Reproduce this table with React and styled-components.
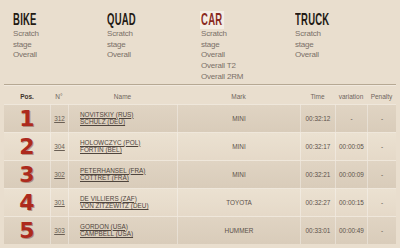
import React from "react";
import styled, { createGlobalStyle } from "styled-components";

const GlobalStyle = createGlobalStyle`
  body {
    margin: 0;
    background: #e9dece;
    font-family: "Liberation Sans", Arial, sans-serif;
  }
`;

const Page = styled.div`
  width: 400px;
  height: 248px;
  overflow: hidden;
`;

const Nav = styled.div`
  display: grid;
  grid-template-columns: repeat(4, 94px);
  padding: 11px 0 0 13px;
`;

const Category = styled.div`
  display: flex;
  flex-direction: column;
  align-items: flex-start;
`;

const Heading = styled.div`
  height: 18px;
  line-height: 18px;
  font-size: 17px;
  font-weight: bold;
  letter-spacing: 0.3px;
  color: ${(p) => (p.$active ? "#8a2a1f" : "#231a14")};
  background: ${(p) => (p.$active ? "#f4ede4" : "transparent")};
  padding: 0 3px 0 2px;
  margin-left: -1px;
  transform: scaleX(0.56);
  transform-origin: left center;
`;

const SubLink = styled.div`
  font-size: 8px;
  line-height: 10.7px;
  letter-spacing: -0.2px;
  color: #7a7068;
`;

const Rule = styled.div`
  margin: 1px 4px 0;
  height: 1px;
  background: #b6a893;
  border-bottom: 1px solid #f1e9de;
`;

const Table = styled.div`
  margin: 4px 4px 0;
  display: grid;
  grid-template-columns: 46px 18px 109px 123px 35px 32px 29px;
`;

const HeadCell = styled.div`
  height: 14px;
  line-height: 14px;
  font-size: 6.5px;
  text-align: center;
  color: ${(p) => (p.$strong ? "#3e342c" : "#6f655c")};
  font-weight: ${(p) => (p.$strong ? "bold" : "normal")};
`;

const Cell = styled.div`
  height: 27px;
  display: flex;
  align-items: center;
  justify-content: ${(p) => p.$align || "center"};
  padding-left: ${(p) => p.$pad || 0}px;
  font-size: 6.4px;
  color: #5c524a;
  background: ${(p) =>
    p.$dark
      ? "linear-gradient(#e0d4c3, #d9ccba)"
      : "linear-gradient(#ebe1d1, #e5d9c8)"};
  border-top: 1px solid #efe7db;
  border-left: ${(p) => (p.$first ? "none" : "1px solid rgba(255,255,255,0.35)")};
`;

const Pos = styled.span`
  font-family: "DejaVu Sans", sans-serif;
  font-weight: bold;
  font-size: 22px;
  color: #ad2a1d;
  text-shadow: 1px 1px 0 rgba(90, 10, 0, 0.35);
`;

const Num = styled.span`
  text-decoration: underline;
  color: #6a5f55;
`;

const Names = styled.div`
  display: flex;
  flex-direction: column;
  line-height: 7.5px;
  text-decoration: underline;
  color: #4f453d;
  font-size: 6.4px;
`;

const categories = [
  { name: "BIKE", links: ["Scratch", "stage", "Overall"] },
  { name: "QUAD", links: ["Scratch", "stage", "Overall"] },
  { name: "CAR", links: ["Scratch", "stage", "Overall", "Overall T2", "Overall 2RM"], active: true },
  { name: "TRUCK", links: ["Scratch", "stage", "Overall"] },
];

const rows = [
  { pos: 1, no: 312, names: ["NOVITSKIY (RUS)", "SCHULZ (DEU)"], mark: "MINI", time: "00:32:12", variation: "-" },
  { pos: 2, no: 304, names: ["HOLOWCZYC (POL)", "FORTIN (BEL)"], mark: "MINI", time: "00:32:17", variation: "00:00:05" },
  { pos: 3, no: 302, names: ["PETERHANSEL (FRA)", "COTTRET (FRA)"], mark: "MINI", time: "00:32:21", variation: "00:00:09" },
  { pos: 4, no: 301, names: ["DE VILLIERS (ZAF)", "VON ZITZEWITZ (DEU)"], mark: "TOYOTA", time: "00:32:27", variation: "00:00:15" },
  { pos: 5, no: 303, names: ["GORDON (USA)", "CAMPBELL (USA)"], mark: "HUMMER", time: "00:33:01", variation: "00:00:49" },
];

export default function App() {
  return (
    <Page>
      <GlobalStyle />
      <Nav>
        {categories.map((c) => (
          <Category key={c.name}>
            <Heading $active={c.active}>{c.name}</Heading>
            {c.links.map((l) => (
              <SubLink key={l}>{l}</SubLink>
            ))}
          </Category>
        ))}
      </Nav>
      <Rule />
      <Table>
        <HeadCell $strong>Pos.</HeadCell>
        <HeadCell>N°</HeadCell>
        <HeadCell>Name</HeadCell>
        <HeadCell>Mark</HeadCell>
        <HeadCell>Time</HeadCell>
        <HeadCell>variation</HeadCell>
        <HeadCell>Penalty</HeadCell>
        {rows.map((r, i) => {
          const dark = i % 2 === 0;
          return (
            <React.Fragment key={r.pos}>
              <Cell $dark={dark} $first>
                <Pos>{r.pos}</Pos>
              </Cell>
              <Cell $dark={dark}>
                <Num>{r.no}</Num>
              </Cell>
              <Cell $dark={dark} $align="flex-start" $pad={11}>
                <Names>
                  {r.names.map((n) => (
                    <span key={n}>{n}</span>
                  ))}
                </Names>
              </Cell>
              <Cell $dark={dark}>{r.mark}</Cell>
              <Cell $dark={dark}>{r.time}</Cell>
              <Cell $dark={dark}>{r.variation}</Cell>
              <Cell $dark={dark}>-</Cell>
            </React.Fragment>
          );
        })}
      </Table>
    </Page>
  );
}
